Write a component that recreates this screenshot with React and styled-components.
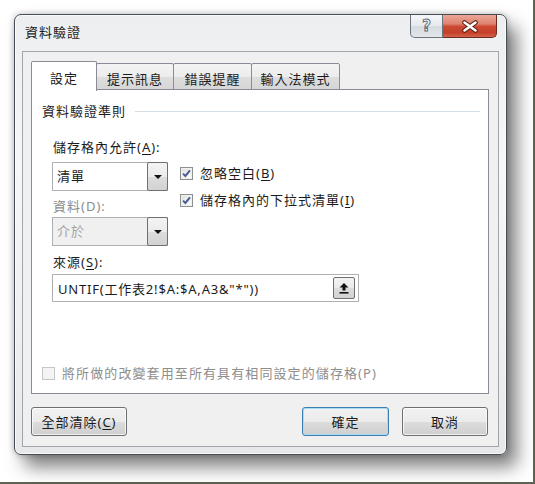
import styled, { createGlobalStyle } from 'styled-components'

const GlobalStyle = createGlobalStyle`
  html, body {
    margin: 0;
    padding: 0;
    background: #fff;
  }
  body {
    font-family: "Noto Sans", "Noto Sans CJK TC", sans-serif;
    font-size: 13px;
    letter-spacing: 1px;
    color: #1b1b1b;
  }
`

const Frame = styled.div`
  box-sizing: border-box;
  width: 535px;
  height: 484px;
  padding: 14px 0 0 14px;
  background: #fff;
  border-right: 2px solid #5f6352;
  border-bottom: 2px solid #5f6352;
`

const Window = styled.div`
  box-sizing: border-box;
  width: 493px;
  height: 441px;
  display: flex;
  flex-direction: column;
  padding: 0 7px 7px;
  border: 1px solid #474d55;
  border-radius: 7px;
  background: linear-gradient(180deg, #eceef0 0%, #f6f7f8 35%, #eef0f2 70%, #e6e8ea 100%);
  box-shadow:
    inset 0 0 0 1px rgba(255, 255, 255, 0.75),
    10px 12px 18px rgba(0, 0, 0, 0.5),
    0 0 6px rgba(0, 0, 0, 0.25);
`

const TitleBar = styled.div`
  height: 36px;
  display: flex;
  justify-content: space-between;
  align-items: flex-start;
`

const Title = styled.div`
  margin-top: 9px;
  padding-left: 3px;
  line-height: 16px;
`

const Caption = styled.div`
  display: flex;
  height: 23px;
  margin-right: 2px;
`

const HelpButton = styled.div`
  box-sizing: border-box;
  width: 33px;
  border: 1px solid #6b747e;
  border-top: none;
  border-radius: 0 0 0 5px;
  background: linear-gradient(180deg, #f4f6f8 0%, #e6e9ed 50%, #d6dbe1 51%, #e2e6ea 100%);
  display: flex;
  align-items: center;
  justify-content: center;
  font: bold 15px "DejaVu Sans", sans-serif;
  letter-spacing: 0;
  color: #f4f6f8;
  -webkit-text-stroke: 0.9px #5b6571;
`

const CloseButton = styled.div`
  box-sizing: border-box;
  width: 54px;
  border: 1px solid #6e2a20;
  border-left: none;
  border-top: none;
  border-radius: 0 0 5px 0;
  background: linear-gradient(180deg, #eaa697 0%, #df8371 40%, #cc4a33 52%, #c53f29 80%, #d4634d 100%);
  display: flex;
  align-items: center;
  justify-content: center;
`

const Client = styled.div`
  flex: 1;
  display: flex;
  flex-direction: column;
  padding: 9px 9px 10px 8px;
  border: 1px solid #a2a5a9;
  background: #f0f0f0;
`

const TabStrip = styled.div`
  display: flex;
  align-items: flex-end;
  position: relative;
  z-index: 1;
`

const Tab = styled.div`
  box-sizing: border-box;
  width: ${p => p.$w}px;
  height: ${p => (p.$active ? 30 : 27)}px;
  margin-left: ${p => (p.$first ? 0 : -1)}px;
  margin-bottom: ${p => (p.$active ? -1 : 0)}px;
  padding-top: ${p => (p.$active ? 8 : 7)}px;
  line-height: 16px;
  text-align: center;
  border: 1px solid #898c95;
  border-bottom: ${p => (p.$active ? 'none' : '1px solid #898c95')};
  border-radius: 2px 2px 0 0;
  background: ${p =>
    p.$active ? '#fff' : 'linear-gradient(180deg, #f4f4f4 0%, #ececec 50%, #dedede 51%, #d6d6d6 100%)'};
  position: relative;
  z-index: ${p => (p.$active ? 2 : 1)};
`

const Panel = styled.div`
  flex: 1;
  display: flex;
  flex-direction: column;
  padding: 13px 8px 12px 10px;
  margin-top: -1px;
  border: 1px solid #898c95;
  background: #fff;
`

const SectionHeader = styled.div`
  display: flex;
  align-items: center;
  gap: 9px;
  line-height: 16px;

  &::after {
    content: '';
    flex: 1;
    height: 1px;
    margin-top: 1px;
    background: #d5dde4;
  }
`

const Fields = styled.div`
  display: grid;
  grid-template-columns: 116px 1fr;
  column-gap: 12px;
  margin: 10px 0 0 10px;
`

const Label = styled.div`
  grid-column: 1;
  margin-top: ${p => p.$top}px;
  padding-left: 1px;
  line-height: 16px;
  white-space: nowrap;
  color: ${p => (p.$disabled ? '#8c8c8c' : 'inherit')};
`

const Select = styled.div`
  grid-column: 1;
  box-sizing: border-box;
  height: 29px;
  margin-top: ${p => p.$top}px;
  display: flex;
  border: 1px solid #adb0b5;
  background: ${p => (p.$disabled ? '#f0f0f0' : '#fff')};
  color: ${p => (p.$disabled ? '#a3a3a3' : 'inherit')};
`

const SelectText = styled.span`
  flex: 1;
  padding-left: 4px;
  line-height: 27px;
`

const DropButton = styled.span`
  box-sizing: border-box;
  width: 21px;
  margin: -1px -1px -1px 0;
  border: 1px solid #707070;
  border-radius: 2px;
  background: linear-gradient(180deg, #f3f3f3 0%, #ebebeb 50%, #dddddd 51%, #d2d2d2 100%);
  display: flex;
  align-items: center;
  justify-content: center;

  &::after {
    content: '';
    border-left: 4px solid transparent;
    border-right: 4px solid transparent;
    border-top: 4px solid #111;
  }
`

const CheckList = styled.div`
  grid-column: 2;
  grid-row: 2 / span 3;
  display: flex;
  flex-direction: column;
  gap: 11px;
  margin-top: 10px;
`

const CheckRow = styled.label`
  display: flex;
  align-items: center;
  gap: 7px;
  line-height: 16px;
  white-space: nowrap;
  color: ${p => (p.$disabled ? '#8e8e8e' : 'inherit')};
`

const Box = styled.span`
  box-sizing: border-box;
  width: 13px;
  height: 13px;
  flex: none;
  border: 1px solid ${p => (p.$disabled ? '#c6c6c6' : '#8e8f8f')};
  background: ${p =>
    p.$disabled ? '#f4f4f4' : 'linear-gradient(135deg, #dcdcdc 0%, #f4f4f4 60%, #ffffff 100%)'};
  box-shadow: inset 0 0 0 1px ${p => (p.$disabled ? '#f4f4f4' : '#f0f0f0')};
  display: flex;
  align-items: center;
  justify-content: center;
`

const SourceInput = styled.div`
  grid-column: 1 / -1;
  box-sizing: border-box;
  width: 307px;
  height: 28px;
  margin-top: 4px;
  display: flex;
  align-items: center;
  padding: 0 3px 0 5px;
  border: 1px solid #adb0b5;
  background: #fff;
`

const SourceText = styled.span`
  flex: 1;
  letter-spacing: 0.8px;
  white-space: nowrap;
`

const UploadButton = styled.span`
  box-sizing: border-box;
  width: 22px;
  height: 22px;
  border: 1px solid #707070;
  border-radius: 2px;
  background: linear-gradient(180deg, #f3f3f3 0%, #ebebeb 50%, #dddddd 51%, #d2d2d2 100%);
  display: flex;
  align-items: center;
  justify-content: center;
`

const BottomCheck = styled(CheckRow)`
  margin-top: auto;
  letter-spacing: 1.1px;
`

const ButtonRow = styled.div`
  display: flex;
  gap: 13px;
  margin-top: 13px;
  padding-right: 1px;
`

const Button = styled.button`
  box-sizing: border-box;
  width: ${p => p.$w}px;
  height: 29px;
  margin-left: ${p => (p.$push ? 'auto' : '0')};
  padding: 0;
  font: inherit;
  letter-spacing: 1px;
  color: #1b1b1b;
  border: 1px solid ${p => (p.$default ? '#3c7fb1' : '#707070')};
  border-radius: 3px;
  background: linear-gradient(180deg, #f2f2f2 0%, #ebebeb 50%, #dddddd 51%, #cfcfcf 100%);
  box-shadow: inset 0 0 0 1px ${p => (p.$default ? '#a6dcf6' : 'rgba(255, 255, 255, 0.7)')};
`

const Key = styled.span`
  text-decoration: underline;
  text-underline-offset: 2px;
`

const Check = () => (
  <svg width="9" height="9" viewBox="0 0 9 9">
    <path d="M1 4.6 L3.4 7 L8 1.4" fill="none" stroke="#4b5f95" strokeWidth="2" />
  </svg>
)

const CloseGlyph = () => (
  <svg width="18" height="13" viewBox="0 0 18 13">
    <path d="M3.5 2.5 L14.5 10.5 M14.5 2.5 L3.5 10.5" stroke="#5a1f14" strokeWidth="4.6" strokeLinecap="round" />
    <path d="M3.5 2.5 L14.5 10.5 M14.5 2.5 L3.5 10.5" stroke="#fff" strokeWidth="2.6" strokeLinecap="round" />
  </svg>
)

const UploadGlyph = () => (
  <svg width="12" height="12" viewBox="0 0 12 12">
    <path d="M6 1 L10.5 5.5 H7.5 V8.5 H4.5 V5.5 H1.5 Z" fill="#111" />
    <rect x="1.5" y="10" width="9" height="1.6" fill="#111" />
  </svg>
)

const tabs = [
  { name: '設定', w: 66 },
  { name: '提示訊息', w: 78 },
  { name: '錯誤提醒', w: 79 },
  { name: '輸入法模式', w: 89 },
]

function App() {
  return (
    <Frame>
      <GlobalStyle />
      <Window>
        <TitleBar>
          <Title>資料驗證</Title>
          <Caption>
            <HelpButton>?</HelpButton>
            <CloseButton>
              <CloseGlyph />
            </CloseButton>
          </Caption>
        </TitleBar>
        <Client>
          <TabStrip>
            {tabs.map((t, i) => (
              <Tab key={t.name} $w={t.w} $active={i === 0} $first={i === 0}>
                {t.name}
              </Tab>
            ))}
          </TabStrip>
          <Panel>
            <SectionHeader>資料驗證準則</SectionHeader>
            <Fields>
              <Label $top={10}>
                儲存格內允許(<Key>A</Key>):
              </Label>
              <Select $top={7}>
                <SelectText>清單</SelectText>
                <DropButton />
              </Select>
              <CheckList>
                <CheckRow>
                  <Box>
                    <Check />
                  </Box>
                  <span>
                    忽略空白(<Key>B</Key>)
                  </span>
                </CheckRow>
                <CheckRow>
                  <Box>
                    <Check />
                  </Box>
                  <span>
                    儲存格內的下拉式清單(<Key>I</Key>)
                  </span>
                </CheckRow>
              </CheckList>
              <Label $top={7} $disabled>
                資料(D):
              </Label>
              <Select $top={3} $disabled>
                <SelectText>介於</SelectText>
                <DropButton />
              </Select>
              <Label $top={8}>
                來源(<Key>S</Key>):
              </Label>
              <SourceInput>
                <SourceText>UNTIF(工作表2!$A:$A,A3&amp;"*"))</SourceText>
                <UploadButton>
                  <UploadGlyph />
                </UploadButton>
              </SourceInput>
            </Fields>
            <BottomCheck $disabled>
              <Box $disabled />
              <span>將所做的改變套用至所有具有相同設定的儲存格(P)</span>
            </BottomCheck>
          </Panel>
          <ButtonRow>
            <Button $w={96}>
              全部清除(<Key>C</Key>)
            </Button>
            <Button $w={87} $push $default>
              確定
            </Button>
            <Button $w={86}>取消</Button>
          </ButtonRow>
        </Client>
      </Window>
    </Frame>
  )
}

export default App
